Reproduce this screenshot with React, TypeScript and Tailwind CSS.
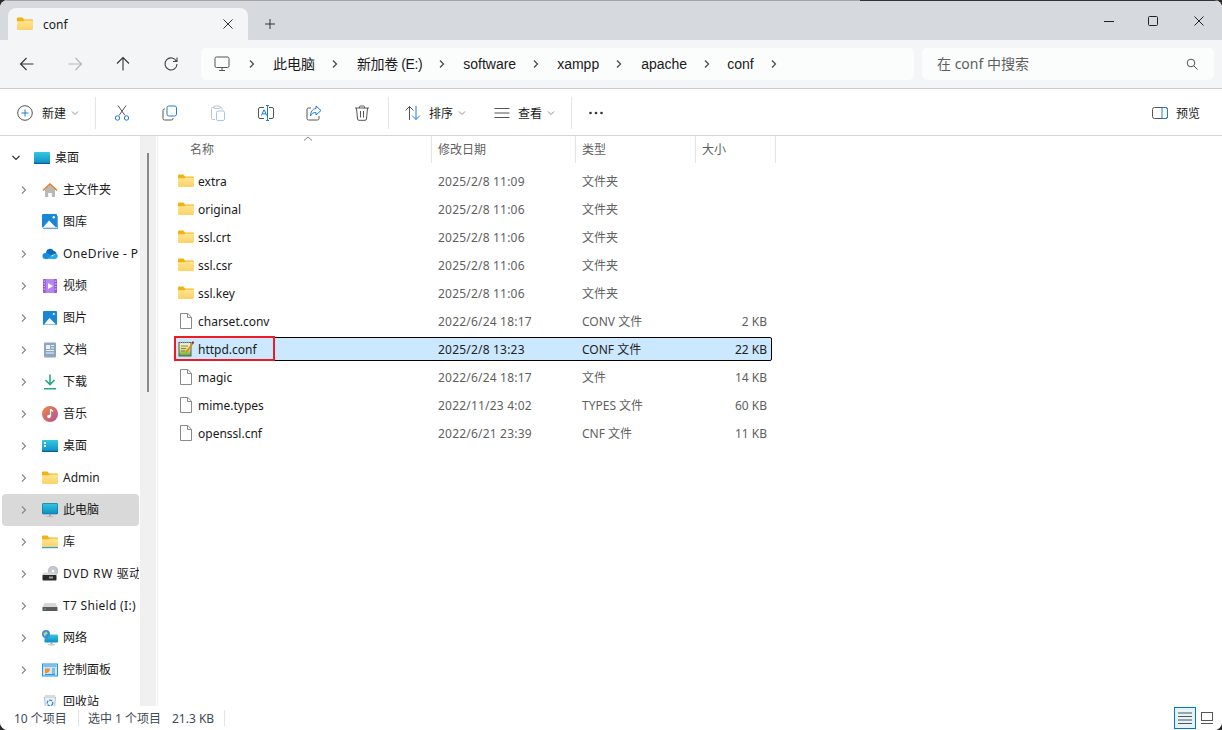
import React from 'react';

const FONT = '"Noto Sans", "Noto Sans CJK SC", sans-serif';

function FolderIcon({ line }: { line?: boolean }) {
  return (
    <svg width="16" height="16" viewBox="0 0 16 16" className="shrink-0">
      <defs>
        <linearGradient id="folderBody" x1="0" y1="0" x2="0" y2="1">
          <stop offset="0" stopColor="#ffe596" />
          <stop offset="1" stopColor="#fbd264" />
        </linearGradient>
      </defs>
      <path d="M0 2.700C0 2 .5 1.500 1.200 1.500h3.600c.4 0 .7.1 1 .4L7 3.500h7.800c.7 0 1.200.5 1.200 1.200V6H0z" fill="#f4b20e" />
      <path d="M0 5.200h6.400L7.600 4.400h7.200c.7 0 1.200.5 1.200 1.200v7.200c0 .7-.5 1.200-1.200 1.200H1.200C.5 14 0 13.500 0 12.800z" fill="url(#folderBody)" />
      {line && <rect x="0" y="13" width="16" height="1.200" fill="#2c9fe0" />}
    </svg>
  );
}

function FileIcon() {
  return (
    <svg width="16" height="16" viewBox="0 0 16 16" className="shrink-0">
      <path d="M2.500.500h7.300l3.700 3.700v11.300h-11z" fill="#fff" stroke="#8a8a8a" />
      <path d="M9.500.500v4h4" fill="none" stroke="#8a8a8a" />
    </svg>
  );
}

function NotepadIcon() {
  return (
    <svg width="16" height="16" viewBox="0 0 16 16" className="shrink-0">
      <defs>
        <linearGradient id="noteFill" x1="0" y1="0" x2="0" y2="1">
          <stop offset="0" stopColor="#f4f4e8" />
          <stop offset="0.5" stopColor="#e8e070" />
          <stop offset="1" stopColor="#4fa83c" />
        </linearGradient>
      </defs>
      <rect x="1" y="1.500" width="12" height="13.500" fill="url(#noteFill)" stroke="#5a5a5a" />
      <path d="M2 1.500h10" stroke="#8aa0c0" strokeWidth="1.500" strokeDasharray="1 1" />
      <path d="M3 5h7M3 7.500h5M3 10h4" stroke="#6b6b6b" strokeWidth=".8" />
      <path d="M15.500.500 8 10l-1 2.500 2.300-1.200L16 2z" fill="#d68a1c" />
      <path d="M15 0l1 1.500-1.200 1.500-1.200-1.300z" fill="#8c1f1f" />
    </svg>
  );
}

function HomeIcon() {
  return (
    <svg width="16" height="16" viewBox="0 0 16 16">
      <path d="M3 7.500 8 3l5 4.500V15H9.800v-4H6.200v4H3z" fill="#b8b8b8" />
      <path d="M.500 8 8 1l7.500 7-1 1L8 3 1.500 9z" fill="#e8791a" />
    </svg>
  );
}
function DesktopTopIcon() {
  return (
    <svg width="16" height="16" viewBox="0 0 16 16">
      <defs>
        <linearGradient id="teal" x1="0" y1="0" x2="0" y2="1">
          <stop offset="0" stopColor="#34c9e0" />
          <stop offset="1" stopColor="#0d8cc4" />
        </linearGradient>
      </defs>
      <rect x="0" y="2" width="16" height="12" rx="1" fill="url(#teal)" />
      <rect x="0" y="12.800" width="16" height="1.200" fill="#0b5f95" />
    </svg>
  );
}
function GalleryIcon() {
  return (
    <svg width="16" height="16" viewBox="0 0 16 16">
      <rect x="0" y="0" width="15" height="13.500" rx="1" fill="#1a86d8" />
      <path d="M1 13.500 7 6.500l7 7z" fill="#fff" />
      <circle cx="11.800" cy="3.200" r="1.200" fill="#fff" />
      <path d="M1 14.500h14.500V2" fill="none" stroke="#6aa8dc" strokeWidth="1.200" />
    </svg>
  );
}
function CloudIcon() {
  return (
    <svg width="16" height="16" viewBox="0 0 16 16">
      <path d="M4 6.200A4.200 4.200 0 0 1 11.800 5c1.600.2 2.600 1.300 2.800 2.600L6 10.500z" fill="#0f6cbd" />
      <path d="M3.500 13A3 3 0 0 1 3.400 7c1.500-.4 2.400 0 3.400.8l3.500 2.200L6 13z" fill="#1490df" />
      <path d="M6 13 14 7.600A2.800 2.800 0 0 1 13.200 13z" fill="#28a8ea" />
    </svg>
  );
}
function VideoIcon() {
  return (
    <svg width="16" height="16" viewBox="0 0 16 16">
      <rect x="1" y="1" width="14" height="14" rx="1" fill="#8b4fd8" />
      <rect x="3.500" y="1" width="9" height="14" fill="#b685f0" />
      <path d="M6 5v6l5-3z" fill="#fff" />
      <path d="M2.200 2.500v11M13.800 2.500v11" stroke="#e6d4fa" strokeWidth="1.200" strokeDasharray="1.200 1.500" />
    </svg>
  );
}
function PictureIcon() {
  return (
    <svg width="16" height="16" viewBox="0 0 16 16">
      <rect x="1" y="1" width="14" height="14" rx="1" fill="#1a86d8" />
      <path d="M2 14.500 7.500 8l6.500 6.500z" fill="#fff" />
      <circle cx="11.800" cy="4" r="1.100" fill="#fff" />
    </svg>
  );
}
function DocIcon() {
  return (
    <svg width="16" height="16" viewBox="0 0 16 16">
      <rect x="2" y="0.500" width="12" height="15" rx="1" fill="#8fa6c2" />
      <rect x="4" y="3" width="4" height="4" fill="#eef2f6" />
      <path d="M9 3.500h3M9 6h3M4 8.500h8M4 11h8" stroke="#eef2f6" />
    </svg>
  );
}
function DownloadIcon() {
  return (
    <svg width="16" height="16" viewBox="0 0 16 16">
      <path d="M8 .500v9.500M3.500 6 8 10.500 12.500 6" fill="none" stroke="#22a884" strokeWidth="1.600" />
      <rect x="2" y="14" width="12" height="1.500" fill="#22a884" />
    </svg>
  );
}
function MusicIcon() {
  return (
    <svg width="16" height="16" viewBox="0 0 16 16">
      <defs>
        <linearGradient id="music" x1="0" y1="0" x2="1" y2="1">
          <stop offset="0" stopColor="#ee8a3c" />
          <stop offset="1" stopColor="#b0509e" />
        </linearGradient>
      </defs>
      <circle cx="8" cy="8" r="8" fill="url(#music)" />
      <path d="M8.500 3v7" stroke="#fff" strokeWidth="1.200" />
      <circle cx="7" cy="10.500" r="1.800" fill="#fff" />
      <path d="M8.500 3c.5 1.300 1.800 1.500 2.500 2.500" fill="none" stroke="#fff" strokeWidth="1.200" />
    </svg>
  );
}
function DesktopIcon() {
  return (
    <svg width="16" height="16" viewBox="0 0 16 16">
      <rect x="0" y="2" width="16" height="12" rx="1" fill="url(#teal)" />
      <rect x="0" y="12.800" width="16" height="1.200" fill="#0b5f95" />
      <path d="M2 4h2v2H2zM2 7h2v2H2z" fill="#fff" />
    </svg>
  );
}
function MonitorIcon() {
  return (
    <svg width="16" height="16" viewBox="0 0 16 16">
      <rect x="0" y="1" width="16" height="11" rx="1" fill="url(#teal)" />
      <rect x="0.500" y="1.500" width="15" height="10.500" rx="1" fill="none" stroke="#1a6e96" strokeWidth=".6" />
      <rect x="7" y="12" width="2" height="2.500" fill="#9aa6ae" />
      <rect x="4.500" y="14.200" width="7" height="1" fill="#b4bcc2" />
    </svg>
  );
}
function DvdIcon() {
  return (
    <svg width="16" height="16" viewBox="0 0 16 16">
      <circle cx="11" cy="5" r="4.800" fill="#c4c8cc" stroke="#9aa0a6" strokeWidth=".5" />
      <circle cx="11" cy="5" r="1.300" fill="#fff" />
      <path d="M0 8.500 2 6.500h10l3 2v1H0z" fill="#d8d8d8" />
      <rect x="0.500" y="9" width="14" height="5.500" rx=".8" fill="#2a2a2a" />
      <rect x="7" y="10.500" width="4" height="2" fill="#999" />
    </svg>
  );
}
function DriveIcon() {
  return (
    <svg width="16" height="16" viewBox="0 0 16 16">
      <path d="M2.500 5h11L15.500 9h-15z" fill="#d6d6d6" />
      <rect x="0.500" y="9" width="15" height="4" rx=".6" fill="#5a5a5a" />
      <rect x="2.500" y="10.500" width="1.500" height="1" fill="#5fd05f" />
    </svg>
  );
}
function NetworkIcon() {
  return (
    <svg width="16" height="16" viewBox="0 0 16 16">
      <rect x="2.500" y="4.500" width="13.500" height="8" rx=".8" fill="url(#teal)" />
      <rect x="8.500" y="12.500" width="2" height="2" fill="#9aa6ae" />
      <rect x="6" y="14.300" width="7" height="1" fill="#b4bcc2" />
      <circle cx="4" cy="4" r="4" fill="#3f8fd0" />
      <path d="M1.500 2.500c1 .5 2 0 2.500-1 .5 1 1.500 1 2 1.500-.5 1.500-2 1-2.500 2.500-.5 1-1.500 1-1.500 0C2 4.500 1.500 3.500 1.500 2.500z" fill="#a9d7a0" />
    </svg>
  );
}
function ControlIcon() {
  return (
    <svg width="16" height="16" viewBox="0 0 16 16">
      <rect x="0.500" y="2" width="15" height="12" fill="#cfe6f8" stroke="#2a94dc" />
      <rect x="1.500" y="3" width="13" height="2" fill="#2a94dc" opacity=".5" />
      <path d="M3 11.500v-5h5a5 5 0 0 1-5 5z" fill="#f0902a" />
      <path d="M10 7h3M10 9h3M10 11h3M3 12.500h10" stroke="#2a94dc" />
    </svg>
  );
}
function RecycleIcon() {
  return (
    <svg width="16" height="16" viewBox="0 0 16 16">
      <path d="M2.500 3h11l-1 12.500h-9z" fill="#edf1f4" stroke="#aab2b8" strokeWidth=".8" />
      <path d="M3 1h10v2H3z" fill="#d6dce0" />
      <circle cx="8" cy="9" r="2.800" fill="none" stroke="#2a8fd8" strokeWidth="1.300" strokeDasharray="3 1" />
    </svg>
  );
}

function Chevron({ open, color = '#8a8a8a' }: { open?: boolean; color?: string }) {
  return (
    <svg width="8" height="8" viewBox="0 0 8 8" className="shrink-0">
      <path d={open ? 'M.5 2 4 5.500 7.500 2' : 'M2 .5 5.500 4 2 7.500'} fill="none" stroke={color} strokeWidth="1.200" />
    </svg>
  );
}

function Caret() {
  return (
    <svg width="8" height="8" viewBox="0 0 8 8" className="shrink-0 ml-[5px]">
      <path d="M1 2.500 4 5.500 7 2.500" fill="none" stroke="#8c8c8c" />
    </svg>
  );
}

const TREE = [
  { name: '主文件夹', icon: <HomeIcon /> },
  { name: '图库', icon: <GalleryIcon />, noArrow: true },
  { name: 'OneDrive - Personal', icon: <CloudIcon />, wide: 'tracking-[0.4px]' },
  { name: '视频', icon: <VideoIcon /> },
  { name: '图片', icon: <PictureIcon /> },
  { name: '文档', icon: <DocIcon /> },
  { name: '下载', icon: <DownloadIcon /> },
  { name: '音乐', icon: <MusicIcon /> },
  { name: '桌面', icon: <DesktopIcon /> },
  { name: 'Admin', icon: <FolderIcon /> },
  { name: '此电脑', icon: <MonitorIcon />, selected: true },
  { name: '库', icon: <FolderIcon line /> },
  { name: 'DVD RW 驱动器 (F:)', icon: <DvdIcon />, wide: 'tracking-[0.6px]' },
  { name: 'T7 Shield (I:)', icon: <DriveIcon />, wide: 'tracking-[0.3px]' },
  { name: '网络', icon: <NetworkIcon /> },
  { name: '控制面板', icon: <ControlIcon /> },
  { name: '回收站', icon: <RecycleIcon />, noArrow: true },
];

const FILES = [
  { name: 'extra', date: '2025/2/8 11:09', type: '文件夹', size: '', kind: 'folder' },
  { name: 'original', date: '2025/2/8 11:06', type: '文件夹', size: '', kind: 'folder' },
  { name: 'ssl.crt', date: '2025/2/8 11:06', type: '文件夹', size: '', kind: 'folder' },
  { name: 'ssl.csr', date: '2025/2/8 11:06', type: '文件夹', size: '', kind: 'folder' },
  { name: 'ssl.key', date: '2025/2/8 11:06', type: '文件夹', size: '', kind: 'folder' },
  { name: 'charset.conv', date: '2022/6/24 18:17', type: 'CONV 文件', size: '2 KB', kind: 'file' },
  { name: 'httpd.conf', date: '2025/2/8 13:23', type: 'CONF 文件', size: '22 KB', kind: 'note' },
  { name: 'magic', date: '2022/6/24 18:17', type: '文件', size: '14 KB', kind: 'file' },
  { name: 'mime.types', date: '2022/11/23 4:02', type: 'TYPES 文件', size: '60 KB', kind: 'file' },
  { name: 'openssl.cnf', date: '2022/6/21 23:39', type: 'CNF 文件', size: '11 KB', kind: 'file' },
];

const CRUMBS = [
  { label: '此电脑', text: '', gap: 'ml-[17px]' },
  { label: '新加卷 (E:)', text: 'tracking-[-0.4px]', gap: 'ml-[18px]' },
  { label: 'software', text: '', gap: 'ml-[17px]' },
  { label: 'xampp', text: '', gap: 'ml-[17px]' },
  { label: 'apache', text: '', gap: 'ml-[18px]' },
  { label: 'conf', text: '', gap: 'ml-4' },
];

function TitleBar() {
  return (
    <div className="h-10 shrink-0 flex flex-col bg-[#d6dadf]">
      <div className="h-px shrink-0 flex">
        <div className="w-[860px] bg-[#a3a5a8]" />
        <div className="flex-1 bg-[#333333]" />
      </div>
      <div className="flex-1 flex">
        <div className="mt-[7px] ml-2 w-[240px] h-8 bg-[#f3f5f7] rounded-t-lg flex items-center pl-[9px] pr-[15px]">
          <FolderIcon />
          <span className="ml-[10px] pt-px text-xs text-[#1a1a1a]">conf</span>
          <svg width="10" height="10" viewBox="0 0 10 10" className="ml-auto">
            <path d="M.5.5l9 9M9.500.5l-9 9" stroke="#333" />
          </svg>
        </div>
        <div className="ml-[17px] mt-[7px] h-8 flex items-center">
          <svg width="10" height="10" viewBox="0 0 10 10">
            <path d="M5 0v10M0 5h10" stroke="#333" />
          </svg>
        </div>
        <div className="ml-auto flex h-10">
          <div className="w-[45px] flex items-center justify-center">
            <svg width="10" height="10" viewBox="0 0 10 10"><path d="M0 5.500h10" stroke="#222" /></svg>
          </div>
          <div className="w-[44px] flex items-center justify-center">
            <svg width="10" height="10" viewBox="0 0 10 10"><rect x=".5" y=".5" width="9" height="9" rx="1" fill="none" stroke="#222" /></svg>
          </div>
          <div className="w-[47px] flex items-center justify-center">
            <svg width="10" height="10" viewBox="0 0 10 10"><path d="M.5.5l9 9M9.500.5l-9 9" stroke="#222" /></svg>
          </div>
        </div>
      </div>
    </div>
  );
}

function NavArrow({ d, color }: { d: string; color: string }) {
  return (
    <div className="w-12 flex items-center justify-center">
      <svg width="16" height="16" viewBox="0 0 16 16">
        <path d={d} fill="none" stroke={color} strokeWidth="1.100" />
      </svg>
    </div>
  );
}

function Crumb({ label, text, gap }: { label: string; text: string; gap: string }) {
  return (
    <>
      <span className={`${gap} text-sm text-[#1a1a1a] leading-none whitespace-nowrap [font-family:'Liberation_Sans','Noto_Sans_CJK_SC',sans-serif] ${text}`}>{label}</span>
      <span className="ml-4"><Chevron color="#444" /></span>
    </>
  );
}

function AddressRow() {
  return (
    <div className="h-[49px] shrink-0 flex items-stretch bg-[#f3f5f7] border-b border-[#c9ced3] pl-[3px] pr-2 py-2">
      <NavArrow d="M14.500 8H1.500M7.500 2l-6 6 6 6" color="#333" />
      <NavArrow d="M1.500 8h13M8.500 2l6 6-6 6" color="#b4b7ba" />
      <NavArrow d="M8 14.500V1.500M2 7.500l6-6 6 6" color="#333" />
      <NavArrow d="M13.500 5.500A6 6 0 1 0 14 8M14 1.500v4h-4" color="#444" />
      <div className="ml-[6px] w-[713px] bg-[#fbfcfc] rounded-[5px] flex items-center pl-[13px]">
        <svg width="16" height="16" viewBox="0 0 16 16">
          <rect x="1" y="1" width="14" height="10.500" rx="1.500" fill="none" stroke="#555" />
          <path d="M8 11.500v3M5 14.500h6" stroke="#555" />
        </svg>
        <span className="ml-[18px]"><Chevron color="#444" /></span>
        {CRUMBS.map(c => (
          <Crumb key={c.label} label={c.label} text={c.text} gap={c.gap} />
        ))}
      </div>
      <div className="ml-2 w-[292px] bg-[#fbfcfc] rounded-[5px] flex items-center pl-[15px] pr-[16px]">
        <span className="text-sm text-[#5f5f5f] leading-none">在 conf 中搜索</span>
        <svg width="12" height="12" viewBox="0 0 12 12" className="ml-auto">
          <circle cx="5" cy="5" r="3.800" fill="none" stroke="#555" />
          <path d="M8 8l3.500 3.500" stroke="#555" />
        </svg>
      </div>
    </div>
  );
}

function ToolIcon({ children }: { children: React.ReactNode }) {
  return (
    <div className="w-12 flex items-center justify-center">
      <svg width="16" height="16" viewBox="0 0 16 16" fill="none">{children}</svg>
    </div>
  );
}

function Toolbar() {
  return (
    <div className="h-[47px] shrink-0 flex items-center bg-white border-b border-[#d2d6da] pt-[2px] pl-[17px] pr-[22px] text-xs text-[#1a1a1a]">
      <svg width="16" height="16" viewBox="0 0 16 16" fill="none">
        <circle cx="8" cy="8" r="7.300" stroke="#555" />
        <path d="M8 4.500v7M4.500 8h7" stroke="#1a7fd4" />
      </svg>
      <span className="ml-[9px] w-6 pt-px">新建</span>
      <Caret />
      <div className="ml-4 mr-[2px] w-px h-8 bg-[#e6e6e6]" />
      <div className="flex h-8">
        <ToolIcon>
          <path d="M4 .5 11 10.500M12 .5 5 10.500" stroke="#555" />
          <circle cx="3.500" cy="13" r="2.200" stroke="#1a7fd4" />
          <circle cx="12.500" cy="13" r="2.200" stroke="#1a7fd4" />
        </ToolIcon>
        <ToolIcon>
          <path d="M3 4H2.500A1.500 1.500 0 0 0 1 5.500v8A1.500 1.500 0 0 0 2.500 15h7a1.500 1.500 0 0 0 1.500-1.500V13" stroke="#555" />
          <rect x="5" y="1" width="9.500" height="10" rx="1.800" stroke="#1a7fd4" />
        </ToolIcon>
        <ToolIcon>
          <path d="M4 2.500H2.500A.8.8 0 0 0 1.500 3.500v10a1 1 0 0 0 1 1H5M10 2.500h1a1 1 0 0 1 1 1V5" stroke="#c4c4c4" />
          <rect x="4" y="1" width="6" height="2.500" rx=".6" stroke="#c4c4c4" />
          <rect x="6.500" y="6" width="8" height="9.500" rx="1.500" stroke="#9ccbef" />
        </ToolIcon>
        <ToolIcon>
          <path d="M6 2.500H2A1.500 1.500 0 0 0 .5 4v8A1.500 1.500 0 0 0 2 13.500h4M11 2.500h3A1.500 1.500 0 0 1 15.500 4v8a1.500 1.500 0 0 1-1.500 1.500h-3" stroke="#555" />
          <path d="M3.500 10.500 5.800 5h.6l2.300 5.500M4.300 8.800h3.600" stroke="#1a7fd4" />
          <path d="M8 .5h3M8 15.500h3M9.500.5v15" stroke="#1a7fd4" />
        </ToolIcon>
        <ToolIcon>
          <path d="M5 3H2.500A1.500 1.500 0 0 0 1 4.500v9A1.500 1.500 0 0 0 2.500 15h9a1.500 1.500 0 0 0 1.500-1.500V11" stroke="#555" />
          <path d="M10 1l5 4.500L10 10V7.500C7.500 7.300 5.500 8.500 4.500 11 4.500 7 6.500 3.800 10 3.500z" stroke="#1a7fd4" />
        </ToolIcon>
        <ToolIcon>
          <path d="M1 3h14M5.500 3V2a1 1 0 0 1 1-1h3a1 1 0 0 1 1 1v1M2.500 3l1 11a1.500 1.500 0 0 0 1.500 1.300h6a1.500 1.500 0 0 0 1.500-1.300l1-11M6.500 6v6.500M9.500 6v6.500" stroke="#555" />
        </ToolIcon>
      </div>
      <div className="ml-[2px] w-px h-8 bg-[#e6e6e6]" />
      <svg width="16" height="16" viewBox="0 0 16 16" fill="none" className="ml-4">
        <path d="M4.500 15V1.500M.5 5.500l4-4 4 4" stroke="#555" />
        <path d="M11 1v13.500M7 10.500l4 4 4-4" stroke="#1a7fd4" />
      </svg>
      <span className="ml-2 w-6 pt-px">排序</span>
      <Caret />
      <svg width="16" height="16" viewBox="0 0 16 16" fill="none" className="ml-7">
        <path d="M.5 3.500h15M.5 8h15M.5 12.500h15" stroke="#555" />
      </svg>
      <span className="ml-2 w-6 pt-px">查看</span>
      <Caret />
      <div className="ml-4 w-px h-8 bg-[#e6e6e6]" />
      <svg width="16" height="16" viewBox="0 0 16 16" className="ml-4">
        <circle cx="2.500" cy="8" r="1.300" fill="#333" />
        <circle cx="8" cy="8" r="1.300" fill="#333" />
        <circle cx="13.500" cy="8" r="1.300" fill="#333" />
      </svg>
      <svg width="16" height="16" viewBox="0 0 16 16" fill="none" className="ml-auto">
        <rect x=".5" y="2.500" width="15" height="11" rx="2" stroke="#555" />
        <path d="M10 2.500v11M10 2.500h3.500a2 2 0 0 1 2 2v7a2 2 0 0 1-2 2H10" stroke="#1a7fd4" />
      </svg>
      <span className="ml-2 pt-px">预览</span>
    </div>
  );
}

function Sidebar() {
  return (
    <div className="w-[140px] shrink-0 overflow-hidden pt-[6px] text-xs text-[#1a1a1a]">
      <div className="h-8 flex items-center pl-3 whitespace-nowrap">
        <Chevron open color="#333" />
        <span className="ml-[14px]"><DesktopTopIcon /></span>
        <span className="ml-[5px]">桌面</span>
      </div>
      {TREE.map(item => (
        <div
          key={item.name}
          className={`h-8 ml-[2px] w-[137px] rounded flex items-center pl-[18px] whitespace-nowrap overflow-hidden ${item.selected ? 'bg-[#d9d9d9]' : ''}`}
        >
          <span className="w-2 shrink-0">{!item.noArrow && <Chevron />}</span>
          <span className="ml-[14px] shrink-0 flex">{item.icon}</span>
          <span className={`ml-[5px] ${item.wide ?? ''}`}>{item.name}</span>
        </div>
      ))}
    </div>
  );
}

function Header() {
  return (
    <div className="h-[27px] flex text-xs text-[#5f5f5f]">
      <div className="relative w-[274px] pl-8 pt-[6px] border-r border-[#e5e5e5]">
        名称
        <svg width="10" height="5" viewBox="0 0 10 5" className="absolute left-[145px] top-0">
          <path d="M1 4.500 5 1l4 3.500" fill="none" stroke="#888" />
        </svg>
      </div>
      <div className="w-[144px] pl-[6px] pt-[6px] border-r border-[#e5e5e5]">修改日期</div>
      <div className="w-[120px] pl-[6px] pt-[6px] border-r border-[#e5e5e5]">类型</div>
      <div className="w-[80px] pl-[6px] pt-[6px] border-r border-[#e5e5e5]">大小</div>
    </div>
  );
}

function FileRow({ file }: { file: (typeof FILES)[number] }) {
  const selected = file.kind === 'note';
  const muted = selected ? 'text-[#222]' : 'text-[#5f5f5f]';
  return (
    <div className={`relative h-6 w-[598px] flex items-center pl-[3px] text-xs border ${selected ? 'bg-[#cce8ff] border-black rounded-[2px]' : 'border-transparent'}`}>
      <div className="w-[260px] flex items-center text-[#1a1a1a]">
        {file.kind === 'folder' ? <FolderIcon /> : file.kind === 'note' ? <NotepadIcon /> : <FileIcon />}
        <span className="ml-1 pt-px">{file.name}</span>
      </div>
      <div className={`w-[144px] pt-px tracking-[0.2px] ${muted}`}>{file.date}</div>
      <div className={`w-[120px] pt-px ${muted}`}>{file.type}</div>
      <div className={`flex-1 text-right pt-px pr-1 ${muted}`}>{file.size}</div>
      {selected && (
        <div className="absolute -left-px -top-[2px] w-[101px] h-[25px] border-2 border-[#ed1c24]" />
      )}
    </div>
  );
}

function StatusBar() {
  return (
    <div className="h-6 shrink-0 flex items-center bg-white pl-[14px] pr-[9px] text-xs text-[#3f4a56]">
      <span className="w-[64px] pt-px">10 个项目</span>
      <div className="w-px h-4 bg-[#e5e5e5]" />
      <span className="ml-[9px] w-[84px] pt-px">选中 1 个项目</span>
      <span className="pt-px">21.3 KB</span>
      <div className="ml-[10px] w-px h-4 bg-[#e5e5e5]" />
      <div className="ml-auto w-[22px] h-[22px] border border-[#0078d4] bg-[#e5f3fb] flex items-center justify-center">
        <svg width="14" height="12" viewBox="0 0 14 12">
          <path d="M0 1h14M0 4.500h14M0 8h14M0 11.500h14" stroke="#555" />
        </svg>
      </div>
      <svg width="12" height="12" viewBox="0 0 12 12" className="ml-[5px]">
        <rect x=".5" y=".5" width="11" height="8" fill="none" stroke="#555" />
        <path d="M0 11.500h12" stroke="#555" />
      </svg>
    </div>
  );
}

export default function App() {
  return (
    <div className="w-[1222px] h-[730px] bg-[#2b2b2b]" style={{ fontFamily: FONT }}>
      <div className="w-full h-full flex flex-col bg-white rounded-lg overflow-hidden">
        <TitleBar />
        <AddressRow />
        <Toolbar />
        <div className="flex-1 min-h-0 flex">
          <Sidebar />
          <div className="w-4 shrink-0 bg-[#f0f0f0] pt-[17px] pl-[7px]">
            <div className="w-[2px] h-[239px] bg-[#8a8a8a]" />
          </div>
          <div className="flex-1 min-w-0 border-l border-[#f0f0f0] ml-px">
            <Header />
            <div className="ml-4 mt-[6px] flex flex-col gap-1">
              {FILES.map(f => <FileRow key={f.name} file={f} />)}
            </div>
          </div>
        </div>
        <StatusBar />
      </div>
    </div>
  );
}
